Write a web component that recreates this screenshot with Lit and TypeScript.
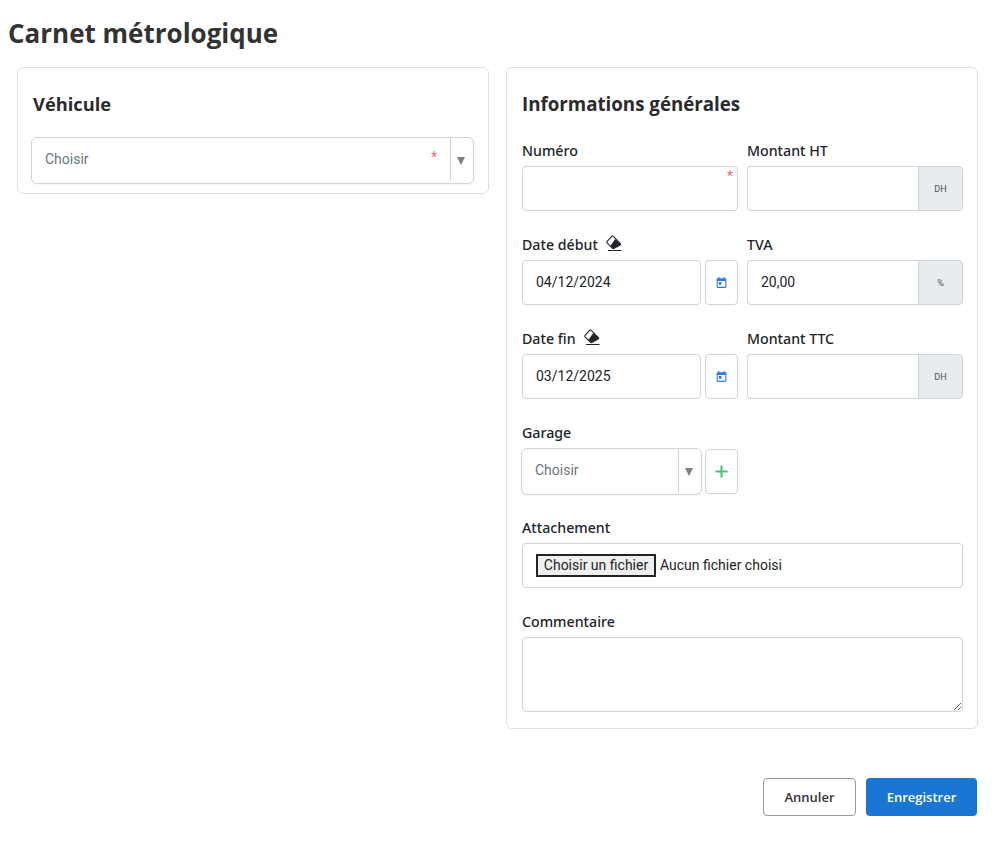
import { LitElement, html, css } from "lit";
import { customElement } from "lit/decorators.js";

const eraser = html`<svg class="eraser" viewBox="0 0 16 16" width="16" height="16"><path fill="#fff" stroke="#212529" stroke-width="1.1" stroke-linejoin="round" d="M5.8 1.2 1 6.6a.9.9 0 0 0 0 1.2l5.6 5.6a.9.9 0 0 0 1.2 0l6.6-3.6a.9.9 0 0 0 0-1.2L7 1.2a.9.9 0 0 0-1.2 0z"/><path fill="#212529" d="M9.2 3.9 4.4 10.9l2.3 2.4a.9.9 0 0 0 1.2 0l6.6-3.4a.9.9 0 0 0 0-1.2z"/><rect x="2" y="15" width="13.5" height="1" fill="#212529"/></svg>`;

const calendar = html`<svg viewBox="0 0 24 24" width="13" height="13"><path fill="#2f7be5" d="M19 4h-1V2h-2v2H8V2H6v2H5a2 2 0 0 0-2 2v14a2 2 0 0 0 2 2h14a2 2 0 0 0 2-2V6a2 2 0 0 0-2-2zm0 16H5V9h14v11zM7 11h5v5H7z"/></svg>`;

@customElement("app-root")
export class AppRoot extends LitElement {
  static styles = css`
    :host {
      display: block;
      font-family: "Roboto", "Liberation Sans", sans-serif;
      font-size: 14px;
      color: #212529;
      background: #fff;
      height: 846px;
      box-sizing: border-box;
    }
    * { box-sizing: border-box; }
    h1 {
      margin: 0;
      padding: 15px 0 0 8px;
      height: 67px;
      font: 700 26px/36px "Open Sans", sans-serif;
      color: #333;
    }
    .cols {
      display: grid;
      grid-template-columns: 472px 472px;
      gap: 17px;
      padding-left: 17px;
      align-items: start;
    }
    .card {
      border: 1px solid #dee2e6;
      border-radius: 6px;
      background: #fff;
    }
    .card.left { padding: 0 14px 9px 13px; height: 127px; }
    .card.right { padding: 0 14px 16px 15px; height: 662px; }
    h2 {
      margin: 0;
      height: 71px;
      padding-top: 22px;
      font: 700 18.72px/28px "Open Sans", sans-serif;
      color: #2b2b2b;
    }
    .left h2 { padding-left: 2px; height: 69px; font-size: 18.3px; }
    .grid {
      display: grid;
      grid-template-columns: 216px 216px;
      column-gap: 9px;
      row-gap: 22px;
    }
    .full { grid-column: 1 / -1; }
    .label {
      display: flex;
      align-items: center;
      height: 27px;
      padding-bottom: 3px;
      font: 500 14.2px/20px "Noto Sans", "Open Sans", sans-serif;
      color: #212529;
    }
    .eraser { margin-left: 8px; margin-top: -4px; }
    .input {
      position: relative;
      height: 45px;
      border: 1px solid #ced4da;
      border-radius: 4px;
      display: block;
      width: 100%;
      padding: 0 13px 2px;
      font: 400 14px "Roboto", sans-serif;
      color: #212529;
      background: #fff;
      outline: none;
    }
    .wrap { position: relative; }
    .star {
      position: absolute;
      color: #ef6b73;
      font: 400 14px/14px "Roboto", sans-serif;
    }
    .wrap > .star { right: 5px; top: 3px; }
    .row { display: flex; gap: 4px; }
    .row .input { flex: 1; min-width: 0; }
    .icon-btn {
      width: 33px;
      height: 45px;
      flex: none;
      border: 1px solid #ced4da;
      border-radius: 4px;
      background: #fff;
      display: flex;
      align-items: center;
      justify-content: center;
    }
    .group { display: flex; height: 45px; }
    .group .input {
      flex: 1;
      min-width: 0;
      border-radius: 4px 0 0 4px;
      border-right: 0;
    }
    .addon {
      width: 45px;
      flex: none;
      background: #e9ecef;
      border: 1px solid #ced4da;
      border-radius: 0 4px 4px 0;
      display: flex;
      align-items: center;
      justify-content: center;
      font: 400 9px "Roboto", sans-serif;
      color: #495057;
    }
    .select {
      position: relative;
      display: flex;
      align-items: stretch;
      border: 1px solid #ced4da;
      border-radius: 6px;
      background: #fff;
      color: #6c757d;
      box-shadow: 0 1px 1px rgba(0, 0, 0, 0.04);
    }
    .select .text {
      flex: 1;
      padding-left: 13px;
      display: flex;
      align-items: center;
      padding-bottom: 3px;
    }
    .select .sep {
      width: 1px;
      background: #ced4da;
      margin-bottom: 2px;
    }
    .select .arrow {
      width: 22px;
      flex: none;
      display: flex;
      align-items: center;
      justify-content: center;
      padding-right: 2px;
    }
    .tri { width: 0; height: 0; border-left: 4.5px solid transparent; border-right: 4.5px solid transparent; border-top: 8px solid #808080; }
    .veh { height: 47px; width: 443px; }
    .veh .star { right: 36px; top: 12px; }
    .gar { height: 47px; width: 181px; margin-left: -1px; margin-bottom: -1px; }
    .gar-row { display: flex; gap: 3px; width: 216px; height: 46px; }
    .gar-row .icon-btn { margin-top: 1px; }
    .file {
      height: 45px;
      border: 1px solid #ced4da;
      border-radius: 4px;
      display: flex;
      align-items: center;
      padding-left: 13px;
      padding-bottom: 1px;
      color: #212529;
    }
    .file .fbtn {
      height: 23px;
      width: 120px;
      border: 2px solid #222;
      background: #efefef;
      display: flex;
      align-items: center;
      justify-content: center;
      margin-right: 4px;
      color: #212529;
    }
    textarea.input { height: 75px; padding: 8px 13px; resize: vertical; }
    .actions {
      display: flex;
      justify-content: flex-end;
      gap: 10px;
      padding: 49px 18px 0 0;
    }
    .btn {
      height: 38px;
      border-radius: 4px;
      display: flex;
      align-items: center;
      justify-content: center;
      font: 600 13px "Open Sans", "Noto Sans", sans-serif;
    }
    .cancel { width: 93px; border: 1px solid #999; background: #fff; color: #333; }
    .save { width: 111px; background: #1976d2; color: #fff; border: 0; }
  `;

  render() {
    return html`
      <h1>Carnet métrologique</h1>
      <div class="cols">
        <section class="card left">
          <h2>Véhicule</h2>
          <div class="select veh">
            <span class="text">Choisir</span>
            <span class="star">*</span>
            <span class="sep"></span>
            <span class="arrow"><span class="tri"></span></span>
          </div>
        </section>
        <section class="card right">
          <h2>Informations générales</h2>
          <div class="grid">
            <div>
              <div class="label">Numéro</div>
              <div class="wrap"><input class="input" /><span class="star">*</span></div>
            </div>
            <div>
              <div class="label">Montant HT</div>
              <div class="group"><input class="input" /><span class="addon">DH</span></div>
            </div>
            <div>
              <div class="label">Date début ${eraser}</div>
              <div class="row"><input class="input" .value=${"04/12/2024"} /><span class="icon-btn">${calendar}</span></div>
            </div>
            <div>
              <div class="label">TVA</div>
              <div class="group"><input class="input" .value=${"20,00"} /><span class="addon">%</span></div>
            </div>
            <div>
              <div class="label">Date fin ${eraser}</div>
              <div class="row"><input class="input" .value=${"03/12/2025"} /><span class="icon-btn">${calendar}</span></div>
            </div>
            <div>
              <div class="label">Montant TTC</div>
              <div class="group"><input class="input" /><span class="addon">DH</span></div>
            </div>
            <div>
              <div class="label">Garage</div>
              <div class="gar-row">
                <div class="select gar">
                  <span class="text">Choisir</span>
                  <span class="sep"></span>
                  <span class="arrow"><span class="tri"></span></span>
                </div>
                <span class="icon-btn"><svg viewBox="0 0 14 14" width="13" height="13"><path d="M7 .5v13M.5 7h13" stroke="#44c274" stroke-width="2.2" fill="none"/></svg></span>
              </div>
            </div>
            <div></div>
            <div class="full">
              <div class="label">Attachement</div>
              <div class="file"><span class="fbtn">Choisir un fichier</span><span>Aucun fichier choisi</span></div>
            </div>
            <div class="full">
              <div class="label">Commentaire</div>
              <textarea class="input"></textarea>
            </div>
          </div>
        </section>
      </div>
      <div class="actions">
        <button class="btn cancel">Annuler</button>
        <button class="btn save">Enregistrer</button>
      </div>
    `;
  }
}
